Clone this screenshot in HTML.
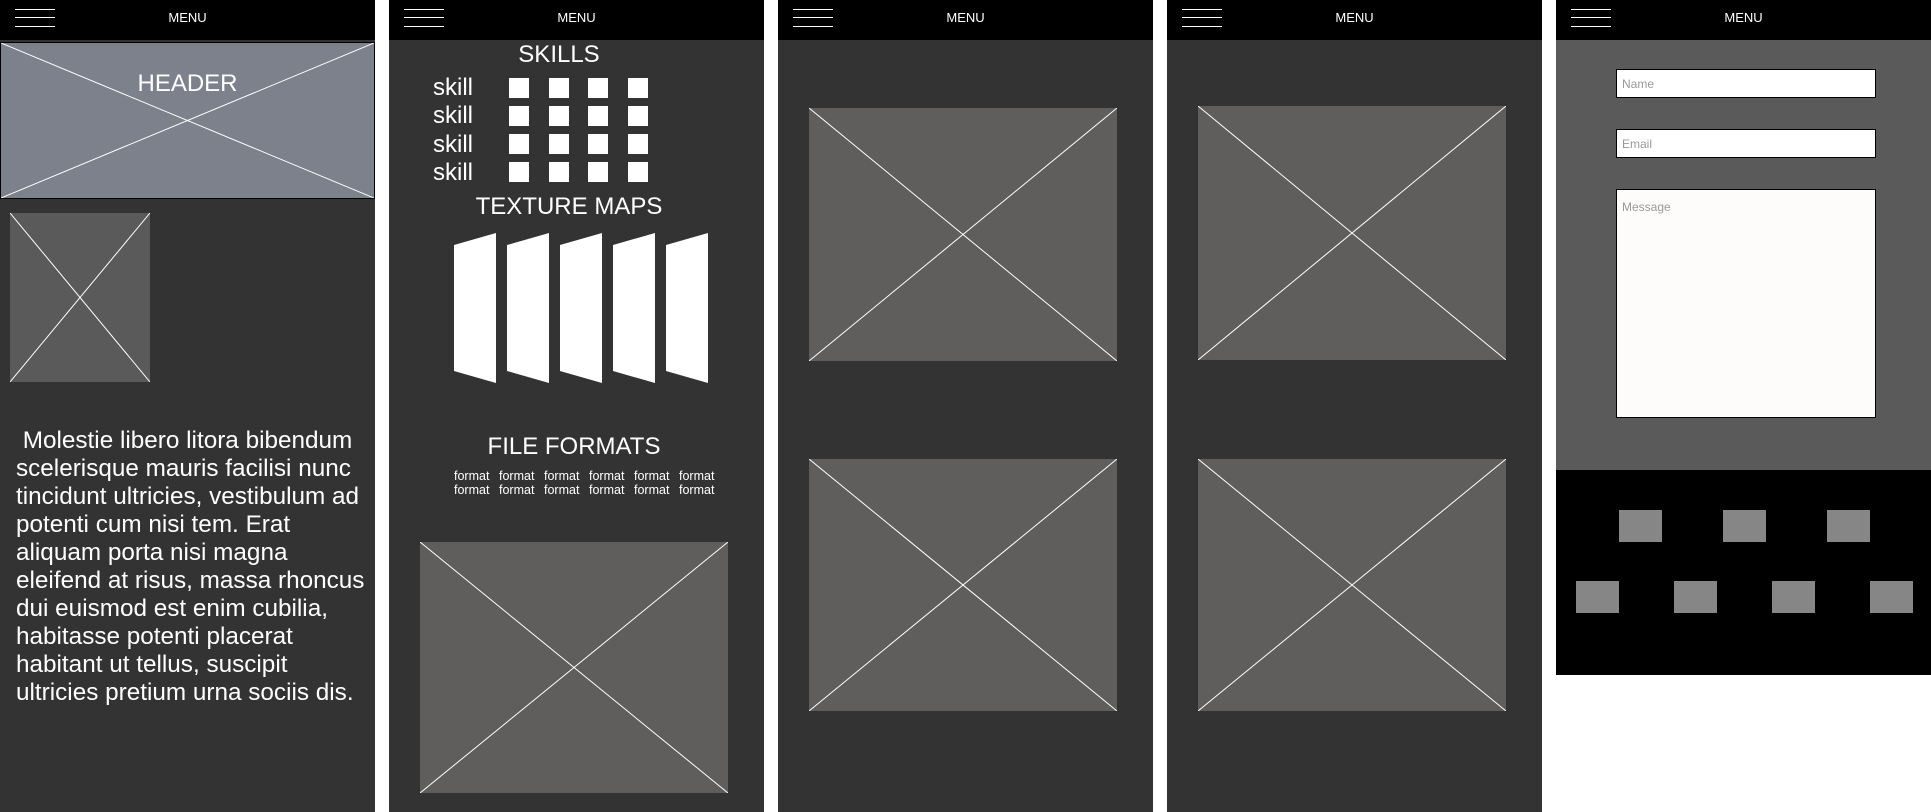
<!DOCTYPE html>
<html><head><meta charset="utf-8"><style>
*{margin:0;padding:0;box-sizing:border-box}
body{width:1931px;height:812px;background:#fff;position:relative;overflow:hidden;font-family:"Liberation Sans",sans-serif;color:#fff}
.a{position:absolute}
.panel{position:absolute;top:0;width:375px;height:812px;background:#333}
.bar{position:absolute;left:0;top:0;width:375px;height:40px;background:#000}
.ham{position:absolute;left:15px;width:40px;height:1px;background:#fff}
.menu{position:absolute;left:0;width:375px;top:10px;text-align:center;font-size:13px}
.x{position:absolute}
.x svg{display:block;width:100%;height:100%}
.t{position:absolute;text-align:center;font-size:24px}
.sq{position:absolute;width:20px;height:20px;background:#fff}
.fm{position:absolute;font-size:12.5px;line-height:14px}
.inp{position:absolute;left:60px;width:260px;background:#fff;border:1.5px solid #000;color:#999;font-size:12px;padding:7px 5px}
.fb{position:absolute;width:43px;height:32px;background:#868686}
</style></head><body>

<!-- Panel 1 -->
<div class="panel" style="left:0">
  <div class="bar"><div class="ham" style="top:9px"></div><div class="ham" style="top:17px"></div><div class="ham" style="top:26px"></div><div class="menu">MENU</div></div>
  <div class="x" style="left:0;top:42px;width:375px;height:157px;background:#7c818c;border:1px solid #000">
    <svg viewBox="0 0 100 100" preserveAspectRatio="none"><line x1="0" y1="0" x2="100" y2="100" stroke="#fff" stroke-width="1" vector-effect="non-scaling-stroke"/><line x1="100" y1="0" x2="0" y2="100" stroke="#fff" stroke-width="1" vector-effect="non-scaling-stroke"/></svg>
  </div>
  <div class="t" style="left:0;width:375px;top:70px">HEADER</div>
  <div class="x" style="left:10px;top:213px;width:140px;height:169px;background:#5a5a5a">
    <svg viewBox="0 0 100 100" preserveAspectRatio="none"><line x1="0" y1="0" x2="100" y2="100" stroke="#fff" vector-effect="non-scaling-stroke"/><line x1="100" y1="0" x2="0" y2="100" stroke="#fff" vector-effect="non-scaling-stroke"/></svg>
  </div>
  <div class="a" style="left:16px;top:427px;font-size:24.3px;line-height:28px;white-space:nowrap">&nbsp;Molestie libero litora bibendum<br>scelerisque mauris facilisi nunc<br>tincidunt ultricies, vestibulum ad<br>potenti cum nisi tem. Erat<br>aliquam porta nisi magna<br>eleifend at risus, massa rhoncus<br>dui euismod est enim cubilia,<br>habitasse potenti placerat<br>habitant ut tellus, suscipit<br>ultricies pretium urna sociis dis.</div>
</div>

<!-- Panel 2 -->
<div class="panel" style="left:389px">
  <div class="bar"><div class="ham" style="top:9px"></div><div class="ham" style="top:17px"></div><div class="ham" style="top:26px"></div><div class="menu">MENU</div></div>
  <div class="t" style="left:0;width:340px;top:41px">SKILLS</div>
  <div class="a" style="left:44px;top:74px;font-size:24px;line-height:28.3px">skill<br>skill<br>skill<br>skill</div>
  <div class="sq" style="left:120px;top:78px"></div><div class="sq" style="left:160px;top:78px"></div><div class="sq" style="left:199px;top:78px"></div><div class="sq" style="left:239px;top:78px"></div>
  <div class="sq" style="left:120px;top:106px"></div><div class="sq" style="left:160px;top:106px"></div><div class="sq" style="left:199px;top:106px"></div><div class="sq" style="left:239px;top:106px"></div>
  <div class="sq" style="left:120px;top:134px"></div><div class="sq" style="left:160px;top:134px"></div><div class="sq" style="left:199px;top:134px"></div><div class="sq" style="left:239px;top:134px"></div>
  <div class="sq" style="left:120px;top:162px"></div><div class="sq" style="left:160px;top:162px"></div><div class="sq" style="left:199px;top:162px"></div><div class="sq" style="left:239px;top:162px"></div>
  <div class="t" style="left:0;width:360px;top:193px">TEXTURE MAPS</div>
  <svg class="a" style="left:0;top:0" width="375" height="400">
    <polygon points="65,245 107,233 107,383 65,371" fill="#fff"/>
    <polygon points="118,245 160,233 160,383 118,371" fill="#fff"/>
    <polygon points="171,245 213,233 213,383 171,371" fill="#fff"/>
    <polygon points="224,245 266,233 266,383 224,371" fill="#fff"/>
    <polygon points="277,245 319,233 319,383 277,371" fill="#fff"/>
  </svg>
  <div class="t" style="left:0;width:370px;top:433px">FILE FORMATS</div>
  <div class="fm" style="left:65px;top:469px">format<br>format</div>
  <div class="fm" style="left:110px;top:469px">format<br>format</div>
  <div class="fm" style="left:155px;top:469px">format<br>format</div>
  <div class="fm" style="left:200px;top:469px">format<br>format</div>
  <div class="fm" style="left:245px;top:469px">format<br>format</div>
  <div class="fm" style="left:290px;top:469px">format<br>format</div>
  <div class="x" style="left:31px;top:542px;width:308px;height:251px;background:#5f5e5c">
    <svg viewBox="0 0 100 100" preserveAspectRatio="none"><line x1="0" y1="0" x2="100" y2="100" stroke="#fff" vector-effect="non-scaling-stroke"/><line x1="100" y1="0" x2="0" y2="100" stroke="#fff" vector-effect="non-scaling-stroke"/></svg>
  </div>
</div>

<!-- Panel 3 -->
<div class="panel" style="left:778px">
  <div class="bar"><div class="ham" style="top:9px"></div><div class="ham" style="top:17px"></div><div class="ham" style="top:26px"></div><div class="menu">MENU</div></div>
  <div class="x" style="left:31px;top:108px;width:308px;height:253px;background:#5f5e5c">
    <svg viewBox="0 0 100 100" preserveAspectRatio="none"><line x1="0" y1="0" x2="100" y2="100" stroke="#fff" vector-effect="non-scaling-stroke"/><line x1="100" y1="0" x2="0" y2="100" stroke="#fff" vector-effect="non-scaling-stroke"/></svg>
  </div>
  <div class="x" style="left:31px;top:459px;width:308px;height:252px;background:#5f5e5c">
    <svg viewBox="0 0 100 100" preserveAspectRatio="none"><line x1="0" y1="0" x2="100" y2="100" stroke="#fff" vector-effect="non-scaling-stroke"/><line x1="100" y1="0" x2="0" y2="100" stroke="#fff" vector-effect="non-scaling-stroke"/></svg>
  </div>
</div>

<!-- Panel 4 -->
<div class="panel" style="left:1167px">
  <div class="bar"><div class="ham" style="top:9px"></div><div class="ham" style="top:17px"></div><div class="ham" style="top:26px"></div><div class="menu">MENU</div></div>
  <div class="x" style="left:31px;top:106px;width:308px;height:254px;background:#5f5e5c">
    <svg viewBox="0 0 100 100" preserveAspectRatio="none"><line x1="0" y1="0" x2="100" y2="100" stroke="#fff" vector-effect="non-scaling-stroke"/><line x1="100" y1="0" x2="0" y2="100" stroke="#fff" vector-effect="non-scaling-stroke"/></svg>
  </div>
  <div class="x" style="left:31px;top:459px;width:308px;height:252px;background:#5f5e5c">
    <svg viewBox="0 0 100 100" preserveAspectRatio="none"><line x1="0" y1="0" x2="100" y2="100" stroke="#fff" vector-effect="non-scaling-stroke"/><line x1="100" y1="0" x2="0" y2="100" stroke="#fff" vector-effect="non-scaling-stroke"/></svg>
  </div>
</div>

<!-- Panel 5 -->
<div class="panel" style="left:1556px;background:#fff">
  <div class="bar"><div class="ham" style="top:9px"></div><div class="ham" style="top:17px"></div><div class="ham" style="top:26px"></div><div class="menu">MENU</div></div>
  <div class="a" style="left:0;top:40px;width:375px;height:430px;background:#5a5a5a">
    <div class="inp" style="top:29px;height:29px">Name</div>
    <div class="inp" style="top:89px;height:29px">Email</div>
    <div class="inp" style="top:149px;height:229px;background:#fdfcfa;padding-top:10px">Message</div>
  </div>
  <div class="a" style="left:0;top:470px;width:375px;height:205px;background:#000">
    <div class="fb" style="left:63px;top:40px"></div>
    <div class="fb" style="left:167px;top:40px"></div>
    <div class="fb" style="left:271px;top:40px"></div>
    <div class="fb" style="left:20px;top:111px"></div>
    <div class="fb" style="left:118px;top:111px"></div>
    <div class="fb" style="left:216px;top:111px"></div>
    <div class="fb" style="left:314px;top:111px"></div>
  </div>
</div>
</body></html>
